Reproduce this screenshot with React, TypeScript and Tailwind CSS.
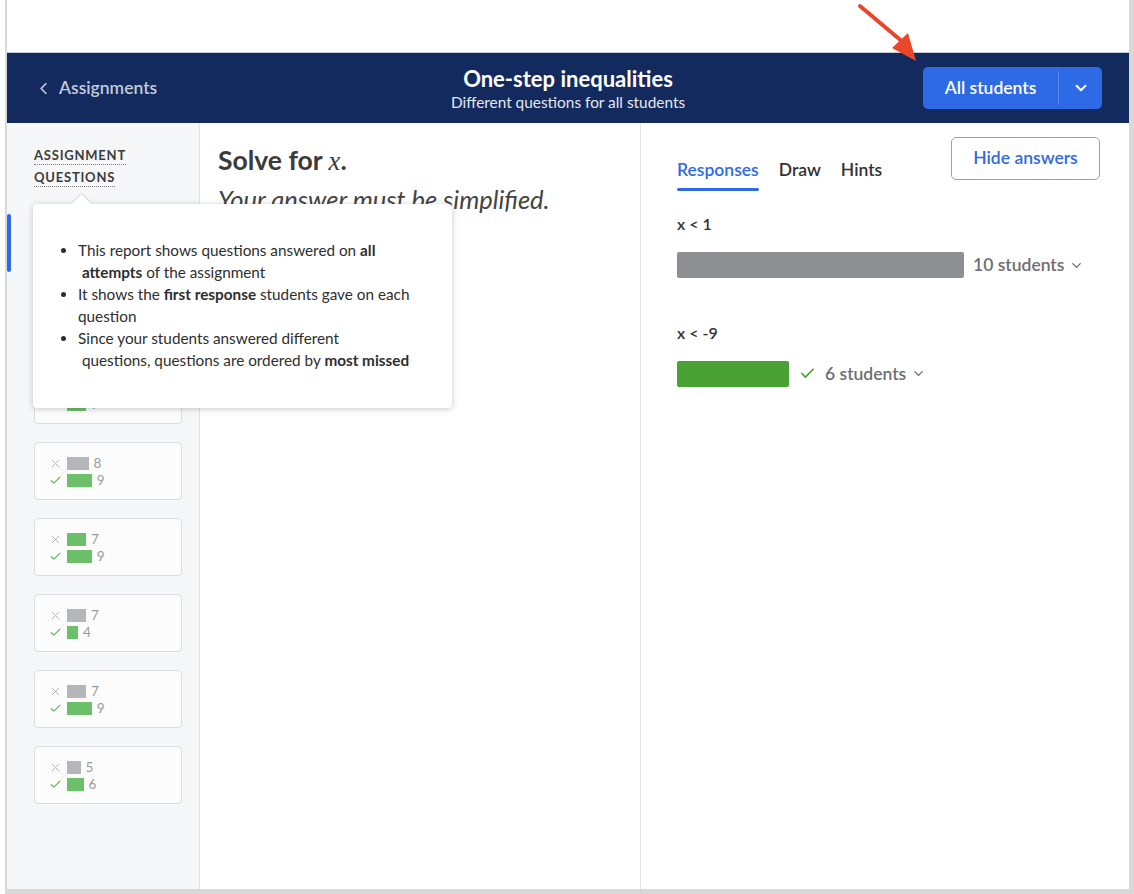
import { ChevronLeft, ChevronDown, Check, X } from "lucide-react";

const cards = [
  { a: 9, aGreen: false, b: 9 },
  { a: 8, aGreen: false, b: 9 },
  { a: 9, aGreen: false, b: 7 },
  { a: 8, aGreen: false, b: 9 },
  { a: 7, aGreen: true, b: 9 },
  { a: 7, aGreen: false, b: 4 },
  { a: 7, aGreen: false, b: 9 },
  { a: 5, aGreen: false, b: 6 },
];

function Card({ a, aGreen, b, active }: { a: number; aGreen: boolean; b: number; active?: boolean }) {
  return (
    <div className="relative">
      {active && <div className="absolute left-[-27px] top-0 h-[58px] w-[4px] rounded-full bg-[#2f6ae6]" />}
      <div className="flex h-[58px] w-[148px] flex-col justify-center gap-[4px] rounded-[4px] border border-[#dcdde0] bg-[#fcfcfd] pl-[14px] pt-[1px]">
        <div className="flex items-center gap-[5px] text-[13.5px] leading-[13px] text-[#9a9b9e]">
          <X className="h-[13px] w-[13px] text-[#a9aaad]" strokeWidth={1.6} />
          <div
            className={aGreen ? "h-[13px] bg-[#6cc06a]" : "h-[13px] bg-[#b5b6b9]"}
            style={{ width: a * 2.7 }}
          />
          <span>{a}</span>
        </div>
        <div className="flex items-center gap-[5px] text-[13.5px] leading-[13px] text-[#9a9b9e]">
          <Check className="h-[13px] w-[13px] text-[#5cb85c]" strokeWidth={2} />
          <div className="h-[13px] bg-[#6cc06a]" style={{ width: b * 2.75 }} />
          <span>{b}</span>
        </div>
      </div>
    </div>
  );
}

export default function App() {
  return (
    <div className="relative h-[894px] w-[1134px] overflow-hidden bg-white font-['Lato','Open_Sans',sans-serif] text-[#333]">
      {/* red annotation arrow */}
      <svg className="absolute left-[850px] top-0 z-20" width="80" height="70" viewBox="0 0 80 70">
        <path d="M10 6 L54 43" stroke="#e9462a" strokeWidth="4" strokeLinecap="round" />
        <path d="M42 48 L66 61 L58 33 Z" fill="#e9462a" />
      </svg>

      <div className="ml-[5px] flex h-[894px] w-[1129px] flex-col border-b-[5px] border-l-[2px] border-r-[5px] border-[#d8d8d8]">
        <div className="h-[53px] border-b border-[#c9ccd4] bg-white" />

        {/* header */}
        <div className="flex h-[70px] items-center bg-[#132a5f] pl-[27px] pr-[27px]">
          <div className="flex flex-1 items-center gap-[6px] text-[17.5px] font-semibold text-[#c3cadb]">
            <ChevronLeft className="h-[19px] w-[19px]" strokeWidth={2.2} />
            Assignments
          </div>
          <div className="flex flex-col items-center pt-[2px]">
            <div className="text-[22px] font-bold leading-[26px] text-white">One-step inequalities</div>
            <div className="text-[15.4px] leading-[20px] text-[#e3e7f0]">Different questions for all students</div>
          </div>
          <div className="flex flex-1 justify-end">
            <div className="flex h-[42px] w-[179px] items-center rounded-[5px] bg-[#2f6ae6] text-white">
              <div className="flex h-full flex-1 items-center justify-center text-[17.5px] font-semibold">All students</div>
              <div className="h-[34px] w-px bg-[#5a89ee]" />
              <div className="flex h-full w-[43px] items-center justify-center">
                <ChevronDown className="h-[18px] w-[18px]" strokeWidth={2.6} />
              </div>
            </div>
          </div>
        </div>

        {/* body */}
        <div className="relative flex flex-1">
          <div className="w-[193px] border-r border-[#e2e3e6] bg-[#f6f7f9] pl-[27px] pt-[21px]">
            <div className="text-[13px] font-bold uppercase leading-[22px] tracking-[0.06em] text-[#3d3d3d]">
              <span className="border-b border-dotted border-[#7a7a7a] pb-[1px]">Assignment</span>
              <br />
              <span className="border-b border-dotted border-[#7a7a7a] pb-[1px]">Questions</span>
            </div>
            <div className="mt-[26px] flex flex-col gap-[18px]">
              {cards.map((c, i) => (
                <Card key={i} {...c} active={i === 0} />
              ))}
            </div>
          </div>

          <div className="w-[441px] border-r border-[#e2e3e6] bg-white pl-[18px] pt-[21px]">
            <div className="text-[26.5px] font-bold leading-[32px] text-[#3b3b3b]">
              Solve for <span className="font-['Liberation_Serif',serif] font-normal italic">x</span>.
            </div>
            <div className="mt-[6px] text-[25.5px] italic leading-[32px] text-[#444]">Your answer must be simplified.</div>
          </div>

          <div className="flex-1 bg-white pl-[36px] pr-[29px] pt-[14px]">
            <div className="flex items-start justify-between">
              <div className="mt-[20px] flex gap-[20px] text-[17.5px] font-semibold">
                <div className="flex flex-col">
                  <span className="text-[#2f6ae6]">Responses</span>
                  <div className="mt-[5px] h-[3px] rounded-full bg-[#2f6ae6]" />
                </div>
                <span className="text-[#333]">Draw</span>
                <span className="text-[#333]">Hints</span>
              </div>
              <div className="flex h-[43px] w-[149px] items-center justify-center rounded-[5px] border border-[#7fa3f0] text-[17.5px] font-semibold text-[#2f6ae6]">
                Hide answers
              </div>
            </div>

            <div className="mt-[21px] text-[16px] font-semibold text-[#333]">x &lt; 1</div>
            <div className="mt-[16px] flex items-center">
              <div className="h-[26px] w-[287px] rounded-[2px] bg-[#8e8f92]" />
              <span className="ml-[9px] text-[17.5px] font-semibold text-[#6d6e71]">10 students</span>
              <ChevronDown className="ml-[5px] h-[15px] w-[15px] text-[#6d6e71]" strokeWidth={2.2} />
            </div>

            <div className="mt-[42px] text-[16px] font-semibold text-[#333]">x &lt; -9</div>
            <div className="mt-[16px] flex items-center">
              <div className="h-[26px] w-[112px] rounded-[2px] bg-[#4aa235]" />
              <Check className="ml-[10px] h-[17px] w-[17px] text-[#4aa235]" strokeWidth={2.4} />
              <span className="ml-[9px] text-[17.5px] font-semibold text-[#6d6e71]">6 students</span>
              <ChevronDown className="ml-[5px] h-[15px] w-[15px] text-[#6d6e71]" strokeWidth={2.2} />
            </div>
          </div>

          {/* info popover */}
          <div className="absolute left-[26px] top-[81px] z-10 h-[204px] w-[419px] rounded-[4px] bg-white shadow-[0_1px_6px_rgba(0,0,0,0.22)]">
            <div className="absolute left-[42px] top-[-7px] h-[13px] w-[13px] rotate-45 bg-white shadow-[-1px_-1px_2px_rgba(0,0,0,0.12)]" />
            <ul className="relative list-disc pl-[45px] pr-[26px] pt-[35px] text-[15.3px] leading-[22px] text-[#2e2e2e]">
              <li>
                This report shows questions answered on <b>all</b>
                <br />
                &nbsp;<b>attempts</b> of the assignment
              </li>
              <li>
                It shows the <b>first response</b> students gave on each question
              </li>
              <li>
                Since your students answered different
                <br />
                &nbsp;questions, questions are ordered by <b>most missed</b>
              </li>
            </ul>
          </div>
        </div>
      </div>
    </div>
  );
}
